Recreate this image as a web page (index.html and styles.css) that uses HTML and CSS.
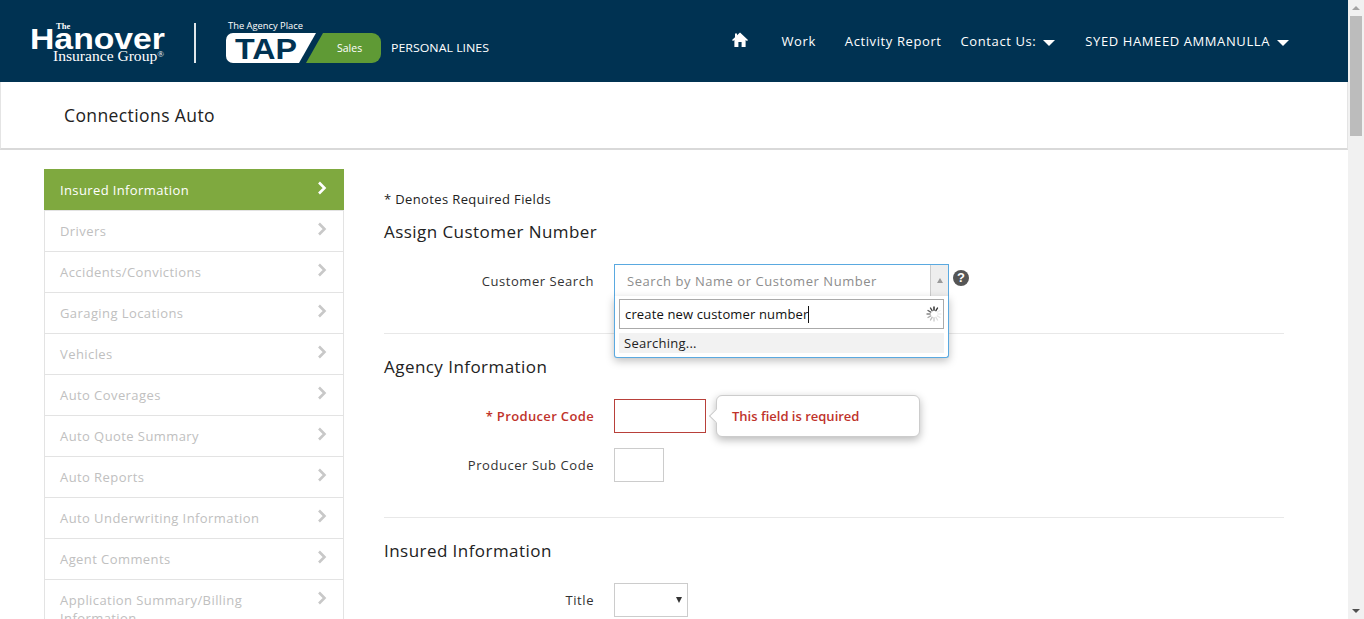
FILE: index.html
```html
<!DOCTYPE html>
<html lang="en">
<head>
<meta charset="utf-8">
<title>Connections Auto</title>
<link rel="stylesheet" href="styles.css">
</head>
<body>
<div class="window">
  <div class="page">
    <header class="topbar">
      <svg class="logo" width="500" height="82" viewBox="0 0 500 82">
        <text x="56" y="29" class="lg-the">The</text>
        <text x="30" y="49" class="lg-hanover" textLength="135" lengthAdjust="spacingAndGlyphs">Hanover</text>
        <text x="53" y="61" class="lg-group" textLength="111" lengthAdjust="spacingAndGlyphs">Insurance Group<tspan class="lg-reg" dy="-4">®</tspan></text>
        <rect x="194" y="23" width="2" height="40" fill="#dfe6ea"/>
        <text x="228" y="29" class="lg-agency" textLength="75" lengthAdjust="spacingAndGlyphs">The Agency Place</text>
        <path d="M233 33H316L299 63H233a7 7 0 0 1-7-7V40a7 7 0 0 1 7-7Z" fill="#fff"/>
        <path d="M323 33H372a9 9 0 0 1 9 9V54a9 9 0 0 1-9 9H306Z" fill="#5f9a35"/>
        <text x="235" y="59" class="lg-tap" textLength="62" lengthAdjust="spacingAndGlyphs">TAP</text>
        <text x="337" y="52" class="lg-sales">Sales</text>
        <text x="391" y="52" class="lg-lines" textLength="98" lengthAdjust="spacingAndGlyphs">PERSONAL LINES</text>
      </svg>
      <nav class="nav">
        <svg class="home" width="16" height="15" viewBox="0 0 16 15"><path d="M8 0.5 16 8 15 9 13.6 8V15H9.6V10H6.4V15H2.4V8L1 9 0 8 3 5.2V1.5H5V3.3Z" fill="#fff"/></svg>
        <a class="nav-link nav-work">Work</a>
        <a class="nav-link nav-activity">Activity Report</a>
        <a class="nav-link nav-contact">Contact Us:<span class="caret"></span></a>
        <a class="nav-link">SYED HAMEED AMMANULLA<span class="caret"></span></a>
      </nav>
    </header>
    <div class="titlebar"><h1 class="title">Connections Auto</h1></div>
    <div class="body">
      <aside class="side">
        <a class="side-item active"><span>Insured Information</span><svg class="chev" width="10" height="14" viewBox="0 0 10 14"><path d="M2 1.5 7.5 7 2 12.5"/></svg></a>
        <a class="side-item"><span>Drivers</span><svg class="chev" width="10" height="14" viewBox="0 0 10 14"><path d="M2 1.5 7.5 7 2 12.5"/></svg></a>
        <a class="side-item"><span>Accidents/Convictions</span><svg class="chev" width="10" height="14" viewBox="0 0 10 14"><path d="M2 1.5 7.5 7 2 12.5"/></svg></a>
        <a class="side-item"><span>Garaging Locations</span><svg class="chev" width="10" height="14" viewBox="0 0 10 14"><path d="M2 1.5 7.5 7 2 12.5"/></svg></a>
        <a class="side-item"><span>Vehicles</span><svg class="chev" width="10" height="14" viewBox="0 0 10 14"><path d="M2 1.5 7.5 7 2 12.5"/></svg></a>
        <a class="side-item"><span>Auto Coverages</span><svg class="chev" width="10" height="14" viewBox="0 0 10 14"><path d="M2 1.5 7.5 7 2 12.5"/></svg></a>
        <a class="side-item"><span>Auto Quote Summary</span><svg class="chev" width="10" height="14" viewBox="0 0 10 14"><path d="M2 1.5 7.5 7 2 12.5"/></svg></a>
        <a class="side-item"><span>Auto Reports</span><svg class="chev" width="10" height="14" viewBox="0 0 10 14"><path d="M2 1.5 7.5 7 2 12.5"/></svg></a>
        <a class="side-item"><span>Auto Underwriting Information</span><svg class="chev" width="10" height="14" viewBox="0 0 10 14"><path d="M2 1.5 7.5 7 2 12.5"/></svg></a>
        <a class="side-item"><span>Agent Comments</span><svg class="chev" width="10" height="14" viewBox="0 0 10 14"><path d="M2 1.5 7.5 7 2 12.5"/></svg></a>
        <a class="side-item side-last"><span>Application Summary/Billing Information</span><svg class="chev" width="10" height="14" viewBox="0 0 10 14"><path d="M2 1.5 7.5 7 2 12.5"/></svg></a>
      </aside>
      <main class="form">
        <p class="note">* Denotes Required Fields</p>
        <h2 class="section-title first">Assign Customer Number</h2>
        <div class="row row-search">
          <label class="label">Customer Search</label>
          <div class="combo-wrap">
            <div class="combo">
              <span class="combo-text">Search by Name or Customer Number</span>
              <span class="combo-arrow"><i class="tri-up"></i></span>
            </div>
            <div class="dropdown">
              <div class="search-box">
                <span class="search-text">create new customer number</span><i class="cursor"></i>
                <svg class="spinner" width="16" height="16" viewBox="0 0 16 16">
                  <g stroke-width="1.4" stroke-linecap="round">
                    <path d="M8 1V4.2" stroke="#222"/><path d="M11.5 2 9.9 4.7" stroke="#333"/>
                    <path d="M14 4.5 11.3 6.1" stroke="#eee"/><path d="M15 8H11.8" stroke="#eee"/>
                    <path d="M14 11.5 11.3 9.9" stroke="#e6e6e6"/><path d="M11.5 14 9.9 11.3" stroke="#ddd"/>
                    <path d="M8 15V11.8" stroke="#ccc"/><path d="M4.5 14 6.1 11.3" stroke="#bbb"/>
                    <path d="M2 11.5 4.7 9.9" stroke="#aaa"/><path d="M1 8H4.2" stroke="#888"/>
                    <path d="M2 4.5 4.7 6.1" stroke="#666"/><path d="M4.5 2 6.1 4.7" stroke="#444"/>
                  </g>
                </svg>
              </div>
              <div class="searching">Searching...</div>
            </div>
            <svg class="help" width="16" height="16" viewBox="0 0 16 16"><circle cx="8" cy="8" r="8" fill="#555"/><text x="8" y="12.4" class="help-q">?</text></svg>
          </div>
        </div>
        <hr class="rule">
        <h2 class="section-title">Agency Information</h2>
        <div class="row row-producer">
          <label class="label label-err">* Producer Code</label>
          <div class="field-wrap">
            <div class="input input-err"></div>
            <div class="tooltip"><i class="tooltip-arrow"></i>This field is required</div>
          </div>
        </div>
        <div class="row row-sub">
          <label class="label">Producer Sub Code</label>
          <div class="input input-sub"></div>
        </div>
        <hr class="rule rule-2">
        <h2 class="section-title">Insured Information</h2>
        <div class="row row-title">
          <label class="label">Title</label>
          <div class="input input-select"><i class="tri-down"></i></div>
        </div>
      </main>
    </div>
  </div>
  <div class="scrollbar">
    <i class="sb-up"></i>
    <div class="sb-thumb"></div>
    <i class="sb-down"></i>
  </div>
</div>
</body>
</html>
```
FILE: styles.css
```css
* { box-sizing: border-box; }
html, body { margin: 0; height: 100%; overflow: hidden; background: #fff; }
body { font-family: "Open Sans", "Liberation Sans", sans-serif; font-size: 13px; font-weight: 400; letter-spacing: 0.55px; color: #333; }
.window { display: flex; height: 619px; }
.page { width: 1348px; height: 619px; overflow: hidden; flex: none; }

.topbar { height: 82px; background: #003252; display: flex; align-items: flex-start; justify-content: space-between; }
.logo { display: block; flex: none; }
.lg-the { font: 700 8.5px "Liberation Serif", serif; fill: #fff; letter-spacing: 0; }
.lg-hanover { font: 700 30px "Liberation Sans", sans-serif; fill: #fff; letter-spacing: 0; }
.lg-group { font: 400 14px "Liberation Serif", serif; fill: #fff; letter-spacing: 0; }
.lg-reg { font-size: 8px; }
.lg-agency { font: 400 9px "Open Sans", sans-serif; fill: #fff; letter-spacing: 0; }
.lg-tap { font: 700 29px "Liberation Sans", sans-serif; fill: #003252; letter-spacing: 0; }
.lg-sales { font: 400 10.5px "Open Sans", sans-serif; fill: #fff; letter-spacing: 0; }
.lg-lines { font: 400 11px "Open Sans", sans-serif; fill: #fff; letter-spacing: 0; }

.nav { display: flex; align-items: center; height: 82px; padding: 0 59px 0 0; color: #fff; font-weight: 400; letter-spacing: 0.6px; }
.home { flex: none; margin-right: 33px; margin-top: -4px; }
.nav-link { color: #fff; display: flex; align-items: center; white-space: nowrap; }
.nav-work { margin-right: 29px; }
.nav-activity { margin-right: 19px; }
.nav-contact { margin-right: 30px; }
.caret { width: 0; height: 0; border-left: 6.5px solid transparent; border-right: 6.5px solid transparent; border-top: 6.5px solid #fff; margin-left: 7px; margin-top: 3px; }

.titlebar { height: 68px; background: #fff; border-left: 1px solid #e4e4e4; border-right: 1px solid #e4e4e4; border-bottom: 2px solid #d9d9d9; display: flex; align-items: center; padding-left: 63px; }
.title { margin: 0; font-size: 17.5px; font-weight: 400; color: #222; letter-spacing: 0.4px; }

.body { display: flex; align-items: flex-start; padding: 19px 64px 0 44px; gap: 40px; }
.side { width: 300px; flex: none; border: 1px solid #e3e3e3; border-top: 0; }
.side-item { display: flex; justify-content: space-between; align-items: flex-start; height: 41px; padding: 12px 16px 0 15px; color: #c0c0c0; border-bottom: 1px solid #e3e3e3; line-height: 17px; letter-spacing: 0.42px; }
.side-item span { display: block; width: 230px; }
.side-item.active { background: #7fa93f; background-clip: padding-box; color: #fff; margin: 0 -1px; width: 300px; height: 42px; padding-top: 13px; padding-left: 16px; padding-right: 17px; border-bottom-color: #e3e3e3; letter-spacing: 0.38px; }
.side-last { height: 60px; border-bottom: 0; line-height: 18px; padding-top: 11px; }
.side-last .chev { margin-top: 0; }
.chev { flex: none; margin-top: -1px; fill: none; stroke: #c8c8c8; stroke-width: 2.6; }
.active .chev { stroke: #fff; }

.form { flex: 1; min-width: 0; padding-top: 22px; }
.note { margin: 0; height: 16px; line-height: 16px; letter-spacing: 0.37px; color: #222; }
.section-title { margin: 21px 0 0; font-size: 17px; font-weight: 400; line-height: 24px; color: #222; letter-spacing: 0.45px; }
.section-title.first { margin-top: 13px; }
.row { display: flex; align-items: center; }
.label { width: 210px; flex: none; margin-right: 20px; text-align: right; }
.row-search { margin-top: 20px; align-items: flex-start; }
.row-search .label { padding-top: 8px; }
.combo-wrap { position: relative; height: 33px; }
.combo { width: 335px; height: 33px; border: 1px solid #5aa9e0; display: flex; align-items: center; justify-content: space-between; }
.combo-text { padding-left: 12px; color: #8d8d8d; }
.combo-arrow { width: 18px; height: 31px; background: #eee; border-left: 1px solid #ccc; display: flex; align-items: center; justify-content: center; }
.tri-up { width: 0; height: 0; border-left: 3.5px solid transparent; border-right: 3.5px solid transparent; border-bottom: 5px solid #999; }
.help { position: absolute; left: 339px; top: 6px; }
.help-q { font: 700 13px "Liberation Sans", sans-serif; fill: #fff; text-anchor: middle; letter-spacing: 0; }
.dropdown { position: absolute; left: 0; top: 32px; width: 335px; height: 62px; background: #fff; border: 1px solid #5aa9e0; border-top: 0; border-radius: 0 0 3px 3px; box-shadow: 0 3px 8px rgba(0,0,0,.25); padding: 3px 4px 0; }
.search-box { height: 30px; border: 1px solid #aaa; display: flex; align-items: center; padding-left: 5px; position: relative; color: #111; }
.search-text { letter-spacing: 0.15px; }
.cursor { width: 1px; height: 17px; background: #111; }
.spinner { position: absolute; right: 1px; top: 6px; }
.searching { margin-top: 4px; height: 20px; line-height: 20px; background: #f2f2f2; padding-left: 5px; color: #222; letter-spacing: 0.25px; }

.rule { border: 0; border-top: 1px solid #e8e8e8; margin: 36px 0 0; height: 0; }
.rule-2 { margin-top: 35px; }
.row-producer { margin-top: 20px; }
.row-sub { margin-top: 15px; }
.label-err { color: #c0332b; font-weight: 600; letter-spacing: 0.35px; }
.field-wrap { position: relative; }
.input { height: 34px; border: 1px solid #ccc; background: #fff; }
.input-err { width: 92px; border-color: #b8403a; }
.input-sub { width: 50px; }
.tooltip { position: absolute; left: 102px; top: -4px; width: 204px; height: 42px; background: #fff; border: 1px solid #ccc; border-radius: 6px; box-shadow: 0 3px 8px rgba(0,0,0,.28); color: #c0332b; font-weight: 600; line-height: 40px; padding-left: 15px; white-space: nowrap; letter-spacing: 0; }
.tooltip-arrow { position: absolute; left: -6px; top: 15px; width: 10px; height: 10px; background: #fff; border-left: 1px solid #ccc; border-bottom: 1px solid #ccc; transform: rotate(45deg); }
.row-title { margin-top: 20px; }
.input-select { width: 74px; display: flex; align-items: center; justify-content: flex-end; padding-right: 5px; }
.tri-down { width: 0; height: 0; border-left: 3px solid transparent; border-right: 3px solid transparent; border-top: 6px solid #333; }

.scrollbar { width: 16px; flex: none; height: 619px; background: #f1f1f1; display: flex; flex-direction: column; align-items: center; position: relative; }
.sb-up { width: 0; height: 0; margin-top: 6px; border-left: 4px solid transparent; border-right: 4px solid transparent; border-bottom: 4px solid #a3a3a3; }
.sb-thumb { width: 12px; height: 120px; margin-top: 6px; background: #bcbcbc; }
.sb-down { width: 0; height: 0; margin-top: auto; margin-bottom: 6px; border-left: 4px solid transparent; border-right: 4px solid transparent; border-top: 4px solid #505050; }
```
